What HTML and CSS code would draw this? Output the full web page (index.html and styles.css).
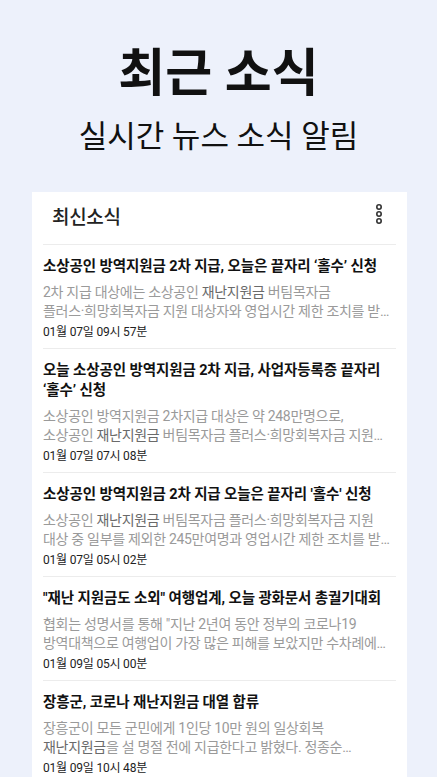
FILE: index.html
```html
<!DOCTYPE html>
<html lang="ko">
<head>
    <meta charset="UTF-8">
    <meta name="viewport" content="width=device-width, initial-scale=1.0">
    <title>최근 소식</title>
    <link rel="stylesheet" href="styles.css">
</head>
<body>

    <header class="hero">
        <h1>최근 소식</h1>
        <p class="subtitle">실시간 뉴스 소식 알림</p>
    </header>

    <div class="card">
        <div class="card-header">
            <h2>최신소식</h2>
            <button class="more" aria-label="더보기">
                <svg width="12" height="20" viewBox="0 0 12 20">
                    <circle cx="6" cy="3" r="2.2" fill="none" stroke="#333" stroke-width="1.6"/>
                    <circle cx="6" cy="10" r="2.2" fill="none" stroke="#333" stroke-width="1.6"/>
                    <circle cx="6" cy="17" r="2.2" fill="none" stroke="#333" stroke-width="1.6"/>
                </svg>
            </button>
        </div>

        <ul class="news-list">
            <li class="news-item">
                <h3>소상공인 방역지원금 2차 지급, 오늘은 끝자리 ‘홀수’ 신청</h3>
                <p class="snippet">2차 지급 대상에는 소상공인 <b>재난지원금</b> 버팀목자금 플러스&#8288;·&#8288;희망회복자금 지원 대상자와 영업시간 제한 조치를 받은 소상공인이 포함된다.</p>
                <span class="date">01월 07일 09시 57분</span>
            </li>
            <li class="news-item">
                <h3>오늘 소상공인 방역지원금 2차 지급, 사업자등록증 끝자리 ‘홀수’ 신청</h3>
                <p class="snippet">소상공인 방역지원금 2차지급 대상은 약 248만명으로, 소상공인 <b>재난지원금</b> 버팀목자금 플러스&#8288;·&#8288;희망회복자금 지원 대상자이다.</p>
                <span class="date">01월 07일 07시 08분</span>
            </li>
            <li class="news-item">
                <h3>소상공인 방역지원금 2차 지급 오늘은 끝자리 '홀수' 신청</h3>
                <p class="snippet">소상공인 <b>재난지원금</b> 버팀목자금 플러스&#8288;·&#8288;희망회복자금 지원 대상 중 일부를 제외한 245만여명과 영업시간 제한 조치를 받은 사업자다.</p>
                <span class="date">01월 07일 05시 02분</span>
            </li>
            <li class="news-item">
                <h3>"재난 지원금도 소외" 여행업계, 오늘 광화문서 총궐기대회</h3>
                <p class="snippet">협회는 성명서를 통해 "지난 2년여 동안 정부의 코로나19 방역대책으로 여행업이 가장 많은 피해를 보았지만 수차례에 걸친 지원에서 소외됐다"고 밝혔다.</p>
                <span class="date">01월 09일 05시 00분</span>
            </li>
            <li class="news-item">
                <h3>장흥군, 코로나 재난지원금 대열 합류</h3>
                <p class="snippet">장흥군이 모든 군민에게 1인당 10만 원의 일상회복 <b>재난지원금</b>을 설 명절 전에 지급한다고 밝혔다. 정종순…</p>
                <span class="date">01월 09일 10시 48분</span>
            </li>
        </ul>
    </div>

</body>
</html>
```

FILE: styles.css
```css
body {
    font-family: Roboto, "Noto Sans CJK KR", sans-serif;
    background: #edf1fb;
    color: #111;
    margin: 0;
    word-break: keep-all;
}

.hero {
    text-align: center;
    padding-top: 44px;
}

.hero h1 {
    font-size: 51px;
    line-height: 60px;
    font-weight: 700;
    margin: 0;
}

.subtitle {
    font-size: 31px;
    line-height: 37px;
    margin: 14px 0 0;
    color: #111;
}

.card {
    background: #fff;
    margin: 37px 30px 0 32px;
}

.card-header {
    height: 46px;
    padding: 0 22px 0 20px;
    margin-bottom: 6px;
    display: flex;
    justify-content: space-between;
    align-items: center;
}

.card-header h2 {
    font-size: 19px;
    font-weight: 500;
    letter-spacing: -0.3px;
    color: #222;
    margin: 0;
}

.more {
    background: none;
    border: none;
    padding: 0;
    display: flex;
    margin-top: -2px;
}

.news-list {
    list-style: none;
    margin: 0 11px;
    padding: 0;
}

.news-item {
    border-top: 1px solid #ececec;
    padding: 12px 0 7px;
}

.news-item h3 {
    font-size: 14.5px;
    line-height: 20px;
    font-weight: 700;
    letter-spacing: -0.1px;
    color: #111;
    margin: 0;
}

.snippet {
    font-size: 14px;
    line-height: 19px;
    letter-spacing: -0.3px;
    color: #9a9a9a;
    margin: 6px 0 0;
    display: -webkit-box;
    -webkit-line-clamp: 2;
    -webkit-box-orient: vertical;
    overflow: hidden;
}

.snippet b {
    font-weight: 400;
    color: #6a6a6a;
}

.date {
    display: block;
    font-size: 12px;
    line-height: 17px;
    letter-spacing: -0.2px;
    color: #222;
    margin-top: 3px;
}
```
